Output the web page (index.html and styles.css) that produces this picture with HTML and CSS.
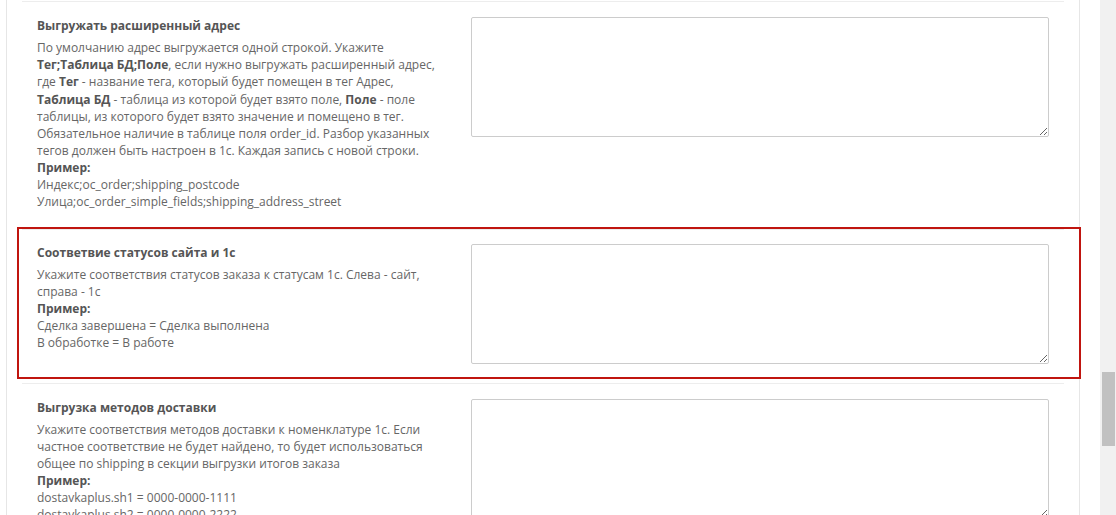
FILE: index.html
```html
<!DOCTYPE html>
<html lang="ru">
<head>
  <meta charset="utf-8">
  <title>Настройки обмена с 1С</title>
  <link rel="stylesheet" href="styles.css">
</head>
<body>
  <div class="page">
    <div class="panel">
      <div class="form-group">
        <div class="col-label">
          <label class="control-label" for="address-ext">Выгружать расширенный адрес</label>
          <span class="help">По умолчанию адрес выгружается одной строкой. Укажите <b>Тег;Таблица БД;Поле</b>, если нужно выгружать расширенный адрес, где <b>Тег</b> - название тега, который будет помещен в тег Адрес, <b>Таблица БД</b> - таблица из которой будет взято поле, <b>Поле</b> - поле таблицы, из которого будет взято значение и помещено в тег. Обязательное наличие в таблице поля order_id. Разбор указанных тегов должен быть настроен в 1с. Каждая запись с новой строки.<br><b>Пример:</b><br>Индекс;oc_order;shipping_postcode<br>Улица;oc_order_simple_fields;shipping_address_street</span>
        </div>
        <div class="col-input">
          <textarea id="address-ext" class="form-control"></textarea>
        </div>
      </div>

      <div class="highlight">
        <div class="form-group">
          <div class="col-label">
            <label class="control-label" for="statuses">Соответвие статусов сайта и 1с</label>
            <span class="help">Укажите соответствия статусов заказа к статусам 1с. Слева - сайт, справа - 1с<br><b>Пример:</b><br>Сделка завершена = Сделка выполнена<br>В обработке = В работе</span>
          </div>
          <div class="col-input">
            <textarea id="statuses" class="form-control"></textarea>
          </div>
        </div>
      </div>

      <div class="form-group">
        <div class="col-label">
          <label class="control-label" for="shipping">Выгрузка методов доставки</label>
          <span class="help">Укажите соответствия методов доставки к номенклатуре 1с. Если частное соответствие не будет найдено, то будет использоваться общее по shipping в секции выгрузки итогов заказа<br><b>Пример:</b><br>dostavkaplus.sh1 = 0000-0000-1111<br>dostavkaplus.sh2 = 0000-0000-2222<br>dostavkaplus.sh3 = 0000-0000-3333</span>
        </div>
        <div class="col-input">
          <textarea id="shipping" class="form-control"></textarea>
        </div>
      </div>
    </div>

    <div class="scrollbar"><div class="thumb"></div></div>
  </div>
</body>
</html>
```

FILE: styles.css
```css
* { box-sizing: border-box; }
html, body { margin: 0; padding: 0; height: 100%; overflow: hidden; }
body {
  font-family: "Open Sans", "Liberation Sans", sans-serif;
  font-size: 12px; line-height: 1.42857; color: #666; background: #fff;
}
.page { display: flex; height: 515px; overflow: hidden; }

.panel {
  flex: none; width: 1074px; margin: 0 20px 0 6px; padding: 0 15px;
  border-left: 1px solid #e6e6e6; border-right: 1px solid #e6e6e6;
  height: 560px;
}

.form-group {
  display: grid; grid-template-columns: 5fr 7fr;
  border-top: 1px solid #ededed; padding: 15px 0;
}
.panel > .form-group:first-child { margin-top: 1px; }
.col-label, .col-input { padding: 0 15px; }

.control-label { display: block; font-weight: bold; color: #555; }
.help { display: block; margin-top: 5px; }
.help b { color: #555; }

.form-control {
  display: block; width: 100%; height: 120px; margin: 0;
  border: 1px solid #ccc; border-radius: 2px; background: #fff;
  font: inherit; padding: 6px 12px;
}

.highlight {
  border: 2px solid #c0150f;
  margin: 1px -17px 4px -5px; padding: 0 15px 0 3px;
}
.highlight .form-group { padding: 14px 0 13px; }

.scrollbar { flex: none; width: 16px; background: #f1f1f1; padding: 372px 1px 0 2px; }
.thumb { height: 74px; background: #c1c1c1; }
```
